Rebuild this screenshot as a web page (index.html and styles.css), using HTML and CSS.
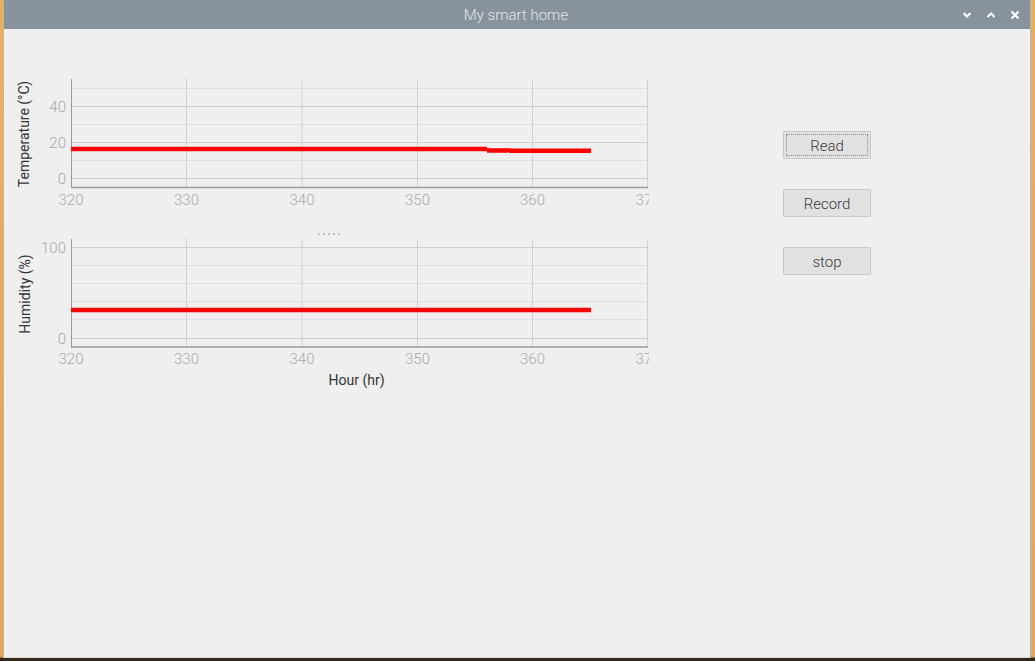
FILE: index.html
```html
<!DOCTYPE html>
<html>
<head>
<meta charset="utf-8">
<link rel="stylesheet" href="styles.css">
</head>
<body>
<div class="window">
  <div class="titlebar">
    <span class="title">My smart home</span>
    <div class="controls">
      <svg class="ctl" width="12" height="12" viewBox="0 0 12 12"><path d="M2.5 4 L6 7.5 L9.5 4" fill="none" stroke="#fff" stroke-width="2"/></svg>
      <svg class="ctl" width="12" height="12" viewBox="0 0 12 12"><path d="M2.5 8 L6 4.5 L9.5 8" fill="none" stroke="#fff" stroke-width="2"/></svg>
      <svg class="ctl" width="12" height="12" viewBox="0 0 12 12"><path d="M2.5 2.5 L9.5 9.5 M9.5 2.5 L2.5 9.5" fill="none" stroke="#fff" stroke-width="2"/></svg>
    </div>
  </div>
  <div class="content">
    <div class="charts">
      <svg class="chart1" width="646" height="145" viewBox="3 70 646 145">
        <g class="grid-minor">
          <line x1="71" y1="88.5" x2="648" y2="88.5"/>
          <line x1="71" y1="124.5" x2="648" y2="124.5"/>
          <line x1="71" y1="160.5" x2="648" y2="160.5"/>
        </g>
        <g class="grid-major">
          <line x1="71" y1="106.5" x2="648" y2="106.5"/>
          <line x1="71" y1="142.5" x2="648" y2="142.5"/>
          <line x1="71" y1="178.5" x2="648" y2="178.5"/>
          <line x1="186.5" y1="79" x2="186.5" y2="187"/>
          <line x1="302" y1="79" x2="302" y2="187"/>
          <line x1="417.5" y1="79" x2="417.5" y2="187"/>
          <line x1="532.5" y1="79" x2="532.5" y2="187"/>
          <line x1="647.5" y1="79" x2="647.5" y2="187"/>
        </g>
        <line class="axis" x1="71.5" y1="79" x2="71.5" y2="188"/>
        <line class="axis axis-b" x1="71" y1="187.5" x2="648" y2="187.5"/>
        <g class="data">
          <line x1="71" y1="149" x2="487" y2="149"/>
          <line x1="487" y1="150.5" x2="508" y2="150.5"/>
          <line x1="508" y1="148.5" x2="508" y2="152"/>
          <line x1="509" y1="150.7" x2="591" y2="150.7"/>
        </g>
        <g class="ticks ticks-y">
          <text x="66" y="111.5">40</text>
          <text x="66" y="147.5">20</text>
          <text x="66" y="184">0</text>
        </g>
        <g class="ticks ticks-x">
          <text x="71" y="204.5">320</text>
          <text x="186.5" y="204.5">330</text>
          <text x="302" y="204.5">340</text>
          <text x="417.5" y="204.5">350</text>
          <text x="532.5" y="204.5">360</text>
          <text x="648" y="204.5">370</text>
        </g>
        <text class="label" transform="translate(29,134) rotate(-90)">Temperature (°C)</text>
      </svg>
      <div class="splitter"><i></i><i></i><i></i><i></i><i></i></div>
      <svg class="chart2" width="646" height="159" viewBox="3 236 646 159">
        <g class="grid-minor">
          <line x1="71" y1="265.5" x2="648" y2="265.5"/>
          <line x1="71" y1="283.5" x2="648" y2="283.5"/>
          <line x1="71" y1="301.5" x2="648" y2="301.5"/>
          <line x1="71" y1="319.5" x2="648" y2="319.5"/>
        </g>
        <g class="grid-major">
          <line x1="71" y1="247.5" x2="648" y2="247.5"/>
          <line x1="71" y1="338.5" x2="648" y2="338.5"/>
          <line x1="186.5" y1="239" x2="186.5" y2="347"/>
          <line x1="302" y1="239" x2="302" y2="347"/>
          <line x1="417.5" y1="239" x2="417.5" y2="347"/>
          <line x1="532.5" y1="239" x2="532.5" y2="347"/>
          <line x1="647.5" y1="239" x2="647.5" y2="347"/>
        </g>
        <line class="axis" x1="71.5" y1="239" x2="71.5" y2="348"/>
        <line class="axis axis-b" x1="71" y1="347" x2="648" y2="347"/>
        <g class="data">
          <line x1="71" y1="310" x2="591" y2="310"/>
        </g>
        <g class="ticks ticks-y">
          <text x="66" y="252.5">100</text>
          <text x="66" y="343.5">0</text>
        </g>
        <g class="ticks ticks-x">
          <text x="71" y="364">320</text>
          <text x="186.5" y="364">330</text>
          <text x="302" y="364">340</text>
          <text x="417.5" y="364">350</text>
          <text x="532.5" y="364">360</text>
          <text x="648" y="364">370</text>
        </g>
        <text class="label label-x" x="356.5" y="385">Hour (hr)</text>
        <text class="label" transform="translate(30,294) rotate(-90)">Humidity (%)</text>
      </svg>
    </div>
    <div class="buttons">
      <button class="btn focused"><span>Read</span></button>
      <button class="btn"><span>Record</span></button>
      <button class="btn"><span>stop</span></button>
    </div>
  </div>
</div>
</body>
</html>
```

FILE: styles.css
```css
html, body {
  margin: 0;
  padding: 0;
}
body {
  width: 1035px;
  height: 661px;
  overflow: hidden;
  background: linear-gradient(to bottom, #e9ae5c 0, #e6a553 657px, #3b2a1a 658px, #2e2216 661px);
  font-family: Roboto, "Noto Sans", sans-serif;
}
.window {
  margin-left: 3px;
  width: 1028px;
  height: 658px;
  background: #efefef;
  display: flex;
  flex-direction: column;
  box-sizing: border-box;
  border-left: 1px solid #b9b3a8;
  border-right: 1px solid #b9b3a8;
  border-bottom: 1px solid #d8d8d8;
}
.titlebar {
  height: 29px;
  flex: none;
  background: #87929a;
  display: flex;
  align-items: center;
  justify-content: center;
  position: relative;
}
.title {
  color: #e4e6e8;
  font-size: 15px;
  font-weight: 300;
  margin-right: 2px;
  margin-top: 1px;
}
.controls {
  position: absolute;
  right: 9px;
  top: 9px;
  display: flex;
  gap: 12px;
}
.ctl {
  display: block;
}
.content {
  display: flex;
  flex: 1;
  margin-left: -1px;
}
.charts {
  display: flex;
  flex-direction: column;
  padding-top: 41px;
  width: 646px;
}
.charts svg {
  display: block;
  overflow: hidden;
}
.grid-minor line {
  stroke: #dedede;
  stroke-width: 1;
}
.grid-major line {
  stroke: #cfcfcf;
  stroke-width: 1;
}
.axis {
  stroke: #9a9a9a;
  stroke-width: 1;
}
.axis-b {
  stroke-width: 1.6;
}
.data line {
  stroke: #ff0000;
  stroke-width: 4.5;
}
.ticks text {
  fill: #a9a9a9;
  font-family: Roboto, "Noto Sans", sans-serif;
  font-size: 15px;
  font-weight: 300;
}
.ticks-y text {
  text-anchor: end;
}
.ticks-x text {
  text-anchor: middle;
}
.label {
  fill: #333333;
  font-family: Roboto, "Noto Sans", sans-serif;
  font-size: 14px;
  text-anchor: middle;
}
.splitter {
  height: 21px;
  display: flex;
  justify-content: flex-start;
  align-items: flex-end;
  gap: 3px;
  padding-left: 315px;
  box-sizing: border-box;
  padding-bottom: 1px;
}
.splitter i {
  display: block;
  width: 2px;
  height: 2px;
  background: #bdbdbd;
}
.buttons {
  display: flex;
  flex-direction: column;
  gap: 30px;
  padding-top: 102px;
  margin-left: 134px;
}
.btn {
  width: 88px;
  height: 28px;
  padding: 2px;
  margin: 0;
  box-sizing: border-box;
  background: #e1e1e1;
  border: 1px solid #c9c9c9;
  border-radius: 1px;
  font-family: Roboto, "Noto Sans", sans-serif;
  font-size: 15px;
  font-weight: 300;
  color: #3a3a3a;
  display: flex;
}
.btn span {
  flex: 1;
  display: flex;
  align-items: center;
  justify-content: center;
  border: 1px dotted transparent;
  padding-top: 1px;
}
.btn.focused span {
  border-color: #888;
}
```
